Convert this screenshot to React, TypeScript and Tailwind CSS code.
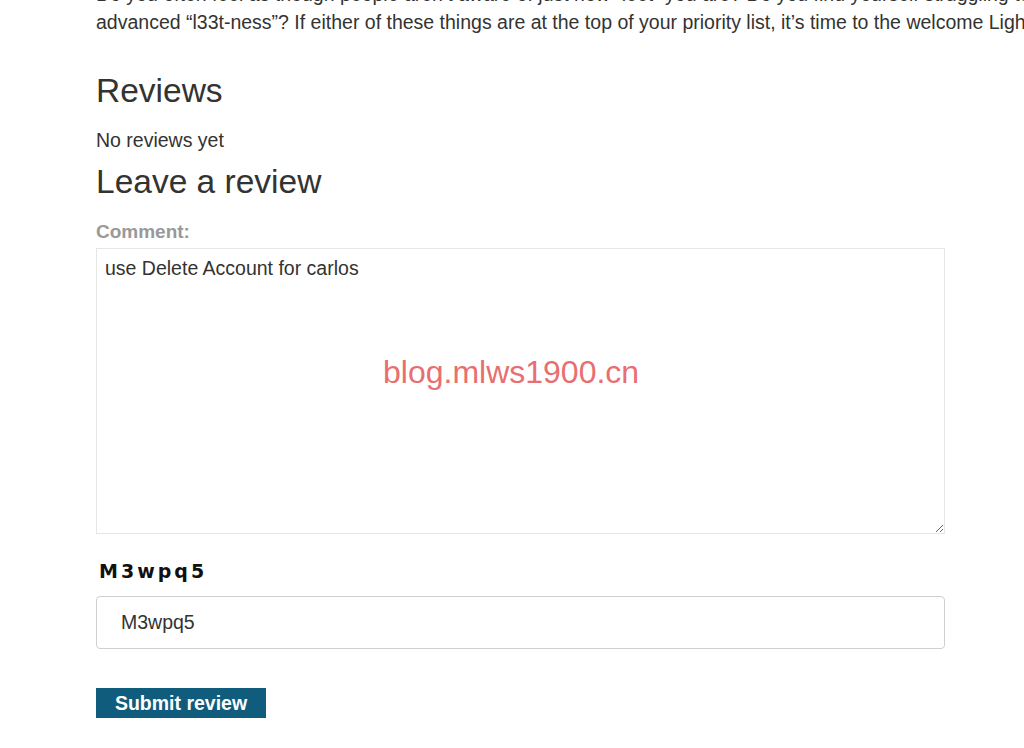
import React from "react";

export default function App() {
  return (
    <div className="relative h-[748px] w-[1024px] overflow-hidden bg-white font-['Liberation_Sans',Arial,sans-serif] text-[#333332]">
      <div className="ml-[96px] w-[960px]">
        <p className="-mt-[20px] whitespace-nowrap text-[19.5px] leading-[28px]">
          Do you often feel as though people aren’t aware of just how “leet” you are? Do you find yourself struggling to
          <br />
          advanced “l33t-ness”? If either of these things are at the top of your priority list, it’s time to the welcome Lightweight
        </p>

        <h2 className="mt-[35px] text-[33.5px] leading-[40px]">Reviews</h2>
        <p className="mt-[17px] text-[19.5px] leading-[24px]">No reviews yet</p>
        <h2 className="mt-[10px] text-[33.5px] leading-[40px]">Leave a review</h2>

        <form className="w-[849px]">
          <label className="mt-[18px] block text-[19px] font-bold leading-[24px] text-[#999]">Comment:</label>
          <textarea
            defaultValue="use Delete Account for carlos"
            className="mt-[4px] block h-[286px] w-full border border-[#e6e6e6] px-[8px] pt-[7px] text-[19.5px] leading-[24px] text-[#333332] outline-none"
          />
          <div className="mt-[25px] pl-[3px] font-['DejaVu_Sans',sans-serif] text-[19px] font-bold leading-[24px] tracking-[3px] text-[#111]">
            M3wpq5
          </div>
          <input
            defaultValue="M3wpq5"
            className="mt-[13px] block h-[53px] w-full rounded-[4px] border border-[#cfcfcf] px-[24px] text-[19.5px] text-[#333332] outline-none"
          />
          <button
            type="button"
            className="mt-[39px] block h-[30px] w-[170px] bg-[#105c7c] text-[19.5px] font-bold leading-[30px] text-white"
          >
            Submit review
          </button>
        </form>
      </div>

      <div className="pointer-events-none absolute left-[383px] top-[352px] text-[32px] leading-[40px] text-[#e86f6f]">
        blog.mlws1900.cn
      </div>
    </div>
  );
}
